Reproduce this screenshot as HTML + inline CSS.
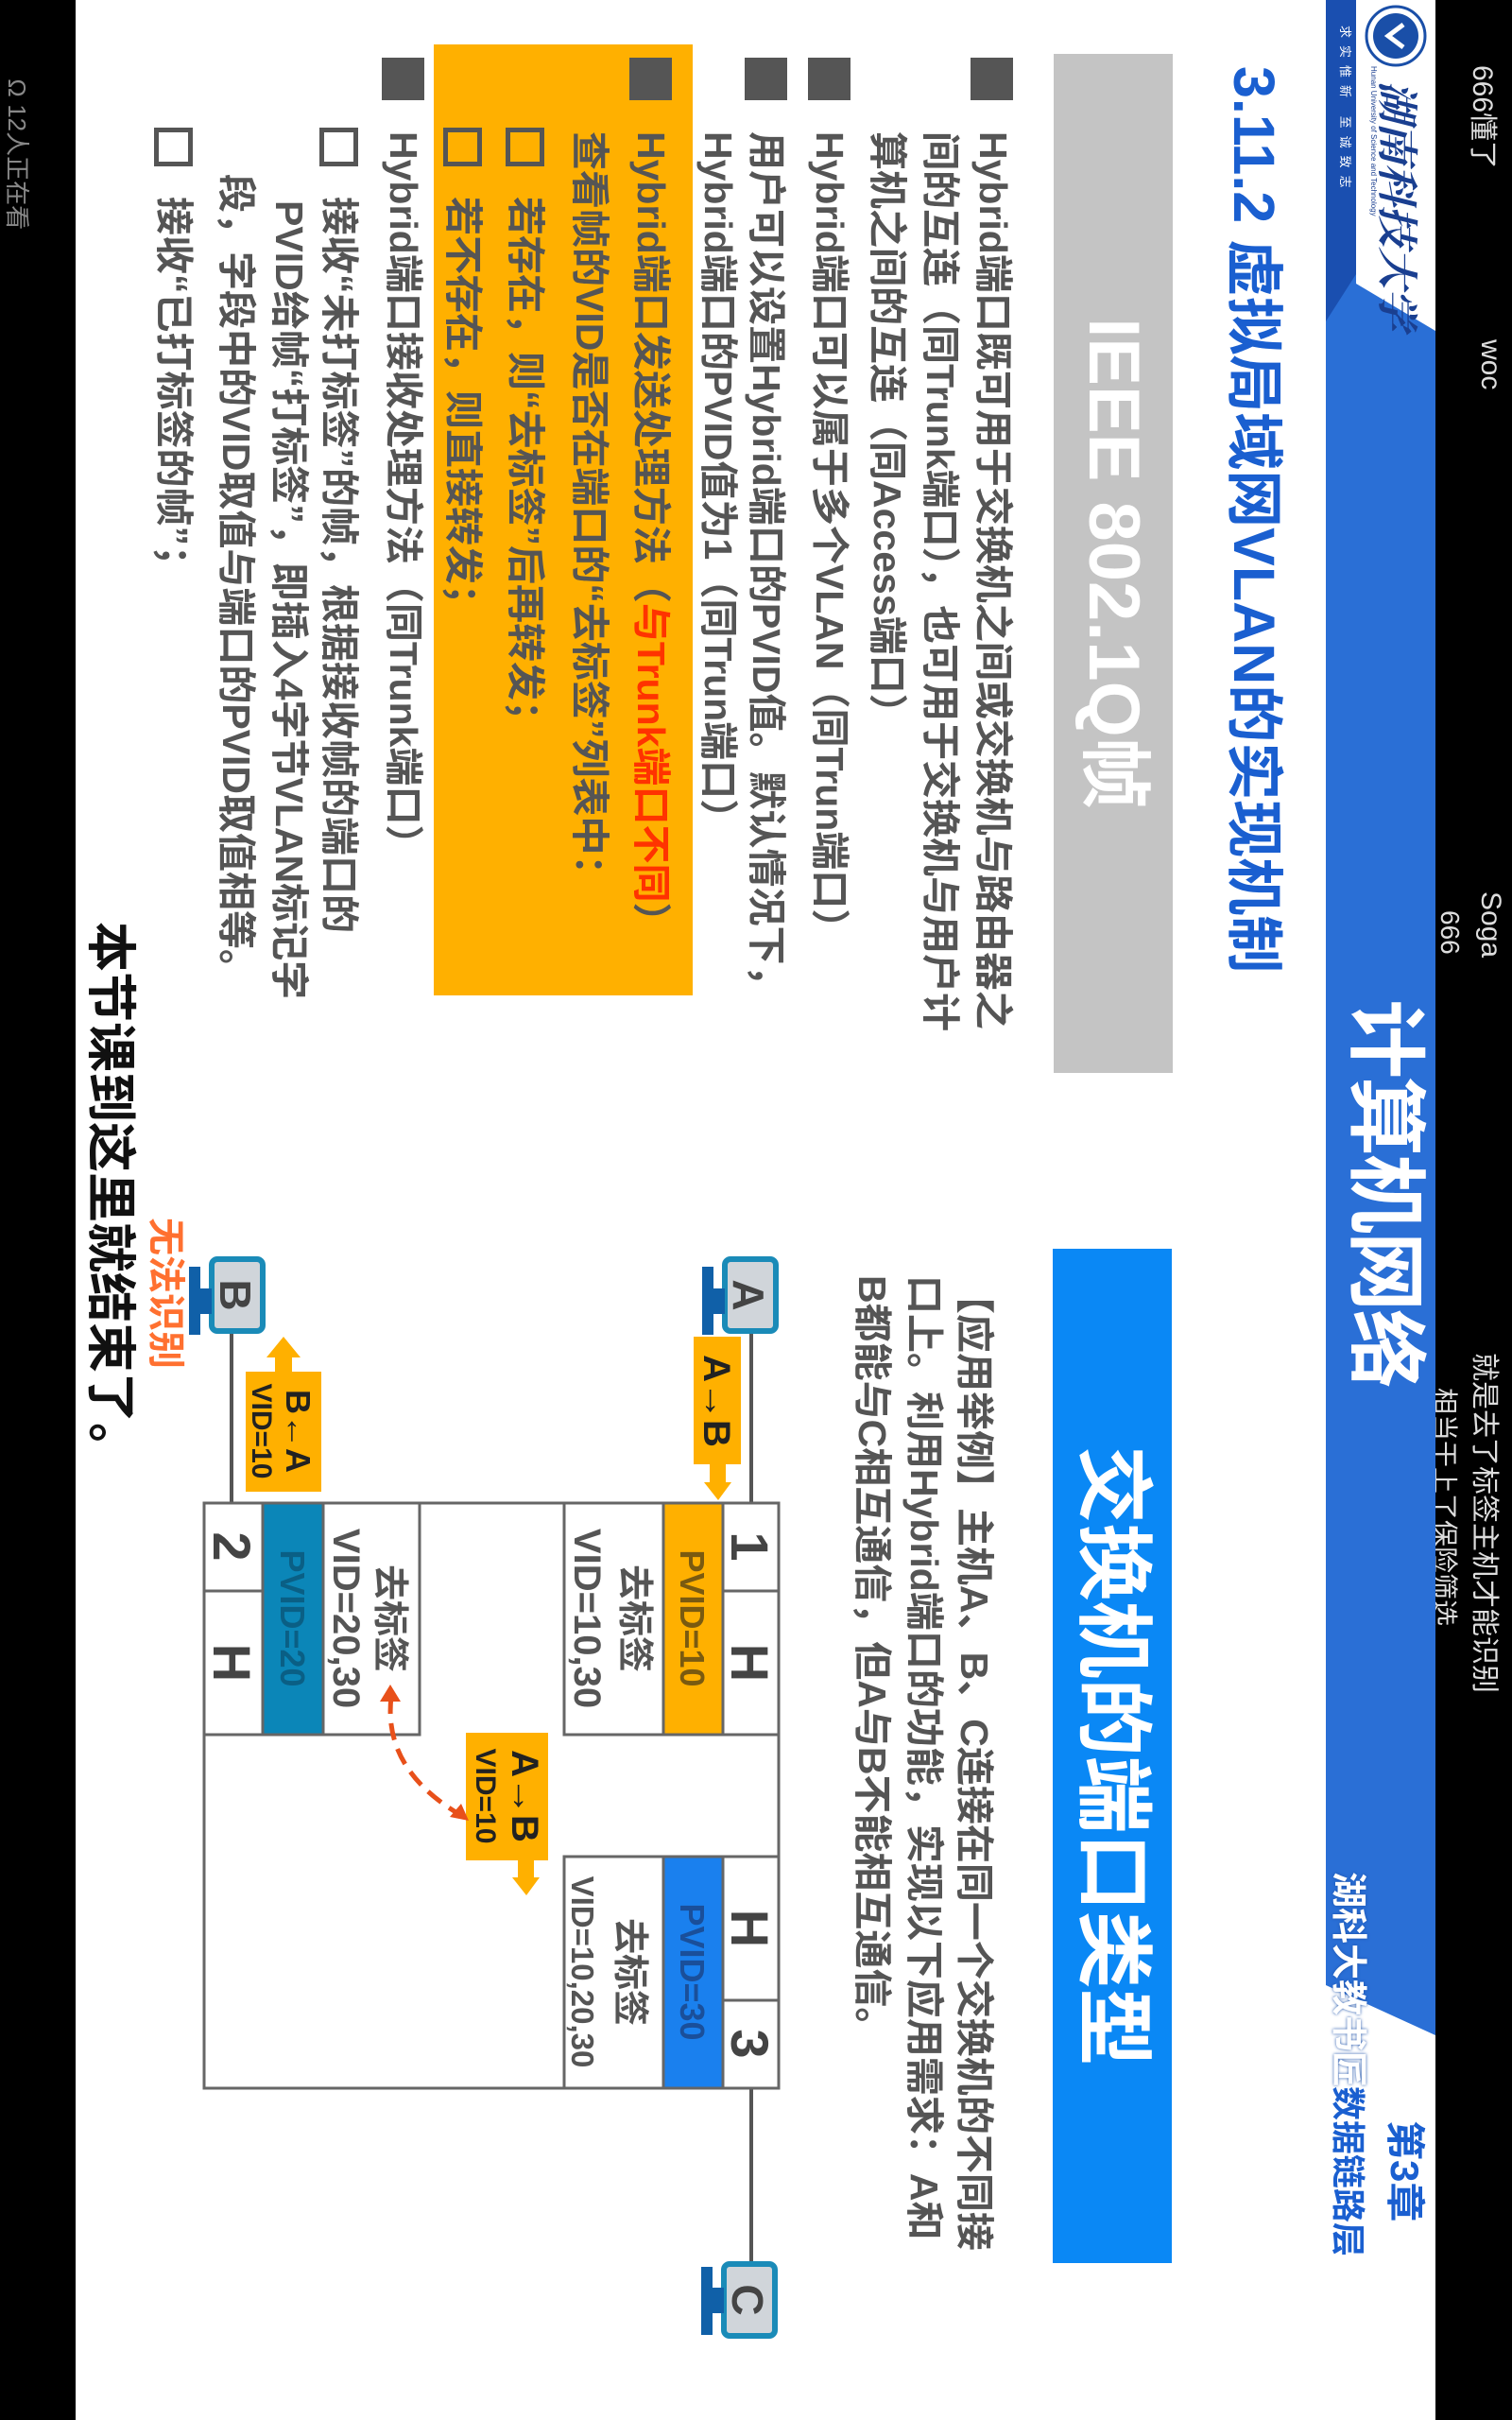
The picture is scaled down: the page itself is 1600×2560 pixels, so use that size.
<!DOCTYPE html>
<html><head><meta charset="utf-8"><style>
*{margin:0;padding:0;box-sizing:border-box}
html,body{width:1600px;height:2560px;overflow:hidden;background:#000}
#L{position:absolute;left:0;top:0;width:2560px;height:1600px;transform-origin:0 0;transform:translateX(1600px) rotate(90deg);background:#fff;overflow:hidden;font-family:"Liberation Sans","Noto Sans CJK SC",sans-serif;font-weight:700}
.a{position:absolute;white-space:nowrap}
.t{font-size:41px;color:#555;height:56px;line-height:56px}
.sq{position:absolute;width:45px;height:45px;background:#555}
.cb{position:absolute;width:41px;height:41px;border:5px solid #555}
</style></head><body>
<div id="L">
<div class="a" style="left:0;top:0;width:2560px;height:81px;background:#000"></div>
<div class="a" style="left:0;top:1520px;width:2560px;height:80px;background:#000"></div>
<div class="a" style="left:69px;top:6px;font-size:30px;color:#ddd;font-weight:400">666懂了</div>
<div class="a" style="left:359px;top:6px;font-size:30px;color:#ddd;font-weight:400">woc</div>
<div class="a" style="left:943px;top:6px;font-size:30px;color:#ddd;font-weight:400">Soga</div>
<div class="a" style="left:963px;top:50px;font-size:28px;color:#ddd;font-weight:400">666</div>
<div class="a" style="left:1431px;top:4px;font-size:30px;color:#ddd;font-weight:400">就是去了标签主机才能识别</div>
<div class="a" style="left:1468px;top:50px;font-size:28px;color:#ddd;font-weight:400">相当于上了保险筛选</div>
<div class="a" style="left:83px;top:1562px;font-size:26px;color:#888;font-weight:400">&#8486; 12人正在看</div>

<svg class="a" style="left:0;top:81px" width="2560" height="116">
<rect x="0" y="0" width="2560" height="116" fill="#2a6fd6"/>
<polygon points="0,84 290,84 340,116 0,116" fill="#1a4fb0"/>
<polygon points="0,0 350,0 300,84 0,84" fill="#fff"/>
<polygon points="2153,0 2560,0 2560,116 2100,116" fill="#fff"/>
<circle cx="38" cy="42" r="31" fill="#fff" stroke="#1a4fa8" stroke-width="3"/>
<circle cx="38" cy="42" r="24" fill="#1a4fa8"/>
<path d="M26 34 L38 50 L50 34" stroke="#fff" stroke-width="5" fill="none"/>
</svg>
<div class="a" style="left:85px;top:86px;font-size:44px;color:#1a3f90;font-family:'Noto Serif CJK SC',serif;font-style:italic;letter-spacing:0px">湖南科技大学</div>
<div class="a" style="left:70px;top:142px;font-size:8px;color:#1a3f90;font-weight:400">Hunan University of Science and Technology</div>
<div class="a" style="left:27px;top:166px;font-size:13px;color:#fff;font-weight:400;letter-spacing:8px">求实惟新 至诚致志</div>
<div class="a" style="left:1057px;top:84px;font-size:84px;color:#fff;line-height:100px;letter-spacing:-2px">计算机网络</div>
<div class="a" style="left:1980px;top:150px;font-size:38px;color:#fff;line-height:48px;text-shadow:0 0 3px #1a4fa8">湖科大教书匠</div>
<div class="a" style="left:2243px;top:88px;font-size:42px;color:#1a5fd0;line-height:52px;text-shadow:0 0 3px #fff">第3章</div>
<div class="a" style="left:2207px;top:150px;font-size:36px;color:#1a5fd0;line-height:48px;text-shadow:0 0 3px #fff">数据链路层</div>

<div class="a" style="left:70px;top:238px;font-size:61px;line-height:70px;color:#1a5fd0">3.11.2 虚拟局域网VLAN的实现机制</div>
<div class="a" style="left:57px;top:359px;width:1078px;height:126px;background:#c4c4c4;color:#fff;font-size:76px;line-height:126px;text-align:center">IEEE 802.1Q帧</div>

<div class="sq" style="left:61px;top:528px"></div>
<div class="a t" style="left:139px;top:521px">Hybrid端口既可用于交换机之间或交换机与路由器之</div>
<div class="a t" style="left:139px;top:577px">间的互连（同Trunk端口），也可用于交换机与用户计</div>
<div class="a t" style="left:139px;top:633px">算机之间的互连（同Access端口）</div>
<div class="sq" style="left:61px;top:700px"></div>
<div class="a t" style="left:139px;top:694px">Hybrid端口可以属于多个VLAN（同Trun端口）</div>
<div class="sq" style="left:61px;top:767px"></div>
<div class="a t" style="left:139px;top:761px">用户可以设置Hybrid端口的PVID值。默认情况下，</div>
<div class="a t" style="left:139px;top:812px">Hybrid端口的PVID值为1（同Trun端口）</div>

<div class="a" style="left:47px;top:867px;width:1006px;height:274px;background:#ffb000"></div>
<div class="sq" style="left:61px;top:889px"></div>
<div class="a t" style="left:139px;top:883px">Hybrid端口发送处理方法（<span style="color:#ff3300">与Trunk端口不同</span>）</div>
<div class="a t" style="left:139px;top:948px">查看帧的VID是否在端口的“去标签”列表中：</div>
<div class="cb" style="left:135px;top:1024px"></div>
<div class="a t" style="left:208px;top:1016px">若存在，则“去标签”后再转发；</div>
<div class="cb" style="left:135px;top:1090px"></div>
<div class="a t" style="left:208px;top:1082px">若不存在，则直接转发；</div>

<div class="sq" style="left:61px;top:1151px"></div>
<div class="a t" style="left:139px;top:1145px">Hybrid端口接收处理方法（同Trunk端口）</div>
<div class="cb" style="left:135px;top:1221px"></div>
<div class="a t" style="left:208px;top:1213px">接收“未打标签”的帧，根据接收帧的端口的</div>
<div class="a t" style="left:212px;top:1266px">PVID给帧“打标签”，即插入4字节VLAN标记字</div>
<div class="a t" style="left:184px;top:1322px">段，字段中的VID取值与端口的PVID取值相等。</div>
<div class="cb" style="left:135px;top:1396px"></div>
<div class="a t" style="left:208px;top:1388px">接收“已打标签的帧”；</div>

<div class="a" style="left:1321px;top:360px;width:1073px;height:126px;background:#0a88f5;color:#fff;font-size:82px;line-height:126px;text-align:center">交换机的端口类型</div>
<div class="a t" style="left:1349px;top:541px">【应用举例】主机A、B、C连接在同一个交换机的不同接</div>
<div class="a t" style="left:1349px;top:594px">口上。利用Hybrid端口的功能，实现以下应用需求：A和</div>
<div class="a t" style="left:1349px;top:649px">B都能与C相互通信，但A与B不能相互通信。</div>

<svg class="a" style="left:0;top:0" width="2560" height="1600" font-family="Liberation Sans, Noto Sans CJK SC, sans-serif" font-weight="700">
<g stroke="#555" stroke-width="4">
<line x1="1409" y1="805" x2="1590" y2="805"/>
<line x1="1409" y1="1355" x2="1590" y2="1355"/>
<line x1="2208" y1="805" x2="2393" y2="805"/>
</g>
<rect x="1590" y="776" width="619" height="608" fill="#fff" stroke="#666" stroke-width="3"/>
<g stroke="#666" stroke-width="3">
<rect x="1590" y="776" width="245" height="227" fill="#fff"/>
<rect x="1590" y="835" width="245" height="63" fill="#ffb000"/>
<line x1="1683" y1="776" x2="1683" y2="835"/>
<rect x="1964" y="776" width="245" height="227" fill="#fff"/>
<rect x="1964" y="835" width="245" height="63" fill="#1a80ee"/>
<line x1="2116" y1="776" x2="2116" y2="835"/>
<rect x="1590" y="1156" width="245" height="228" fill="#fff"/>
<rect x="1590" y="1258" width="245" height="64" fill="#0b86b8"/>
<line x1="1683" y1="1322" x2="1683" y2="1384"/>
</g>
<g fill="#444" font-size="56" text-anchor="middle">
<text x="1636" y="826">1</text><text x="1759" y="826">H</text>
<text x="2040" y="826">H</text><text x="2162" y="826">3</text>
<text x="1636" y="1374">2</text><text x="1759" y="1374">H</text>
</g>
<g text-anchor="middle" font-size="36">
<text x="1712" y="880" fill="#7a5a10">PVID=10</text>
<text x="2086" y="880" fill="#1a4f9a">PVID=30</text>
<text x="1712" y="1303" fill="#0a5f85">PVID=20</text>
</g>
<g text-anchor="middle" fill="#555">
<text x="1712" y="941" font-size="38">去标签</text>
<text x="1712" y="992" font-size="40">VID=10,30</text>
<text x="2086" y="946" font-size="38">去标签</text>
<text x="2086" y="995" font-size="33">VID=10,20,30</text>
<text x="1712" y="1200" font-size="38">去标签</text>
<text x="1712" y="1247" font-size="40">VID=20,30</text>
</g>
<g>
<rect x="1332" y="779" width="76" height="54" rx="6" fill="#d0d5da" stroke="#1a8bb8" stroke-width="6"/>
<rect x="1363" y="833" width="27" height="12" fill="#1060a8"/><rect x="1340" y="845" width="72" height="12" fill="#1060a8"/>
<text x="1370" y="824" font-size="46" fill="#444" text-anchor="middle">A</text>
<rect x="1332" y="1322" width="76" height="54" rx="6" fill="#d0d5da" stroke="#1a8bb8" stroke-width="6"/>
<rect x="1363" y="1376" width="27" height="12" fill="#1060a8"/><rect x="1340" y="1388" width="72" height="12" fill="#1060a8"/>
<text x="1370" y="1367" font-size="46" fill="#444" text-anchor="middle">B</text>
<rect x="2395" y="780" width="76" height="54" rx="6" fill="#d0d5da" stroke="#1a8bb8" stroke-width="6"/>
<rect x="2420" y="834" width="27" height="12" fill="#1060a8"/><rect x="2398" y="846" width="72" height="12" fill="#1060a8"/>
<text x="2433" y="825" font-size="46" fill="#444" text-anchor="middle">C</text>
</g>
<g fill="#ffb000">
<rect x="1414" y="816" width="135" height="50"/>
<rect x="1548" y="832" width="22" height="17"/><polygon points="1568,826 1568,855 1587,840"/>
<rect x="1451" y="1260" width="127" height="80"/>
<rect x="1434" y="1291" width="18" height="18"/><polygon points="1436,1282 1436,1318 1414,1300"/>
<rect x="1833" y="1020" width="135" height="87"/>
<rect x="1966" y="1035" width="22" height="17"/><polygon points="1986,1029 1986,1058 2005,1043"/>
</g>
<g fill="#222" text-anchor="middle">
<text x="1482" y="855" font-size="40">A→B</text>
<text x="1514" y="1297" font-size="36">B←A</text>
<text x="1514" y="1333" font-size="30">VID=10</text>
<text x="1900" y="1058" font-size="40">A→B</text>
<text x="1900" y="1096" font-size="30">VID=10</text>
</g>
<path d="M1795 1186 Q1870 1195 1918 1116" fill="none" stroke="#e8501a" stroke-width="5" stroke-dasharray="18,10"/>
<polygon points="1782,1187 1800,1176 1800,1198" fill="#e8501a"/>
<polygon points="1926,1104 1908,1112 1922,1124" fill="#e8501a"/>
</svg>

<div class="a" style="left:1288px;top:1400px;font-size:40px;line-height:50px;color:#ff7030;text-shadow:0 0 3px #fff,0 0 3px #fff">无法识别</div>
<div class="a" style="left:975px;top:1452px;font-size:53px;line-height:64px;color:#111;text-shadow:0 0 3px #fff,0 0 3px #fff">本节课到这里就结束了。</div>
</div>
</body></html>
